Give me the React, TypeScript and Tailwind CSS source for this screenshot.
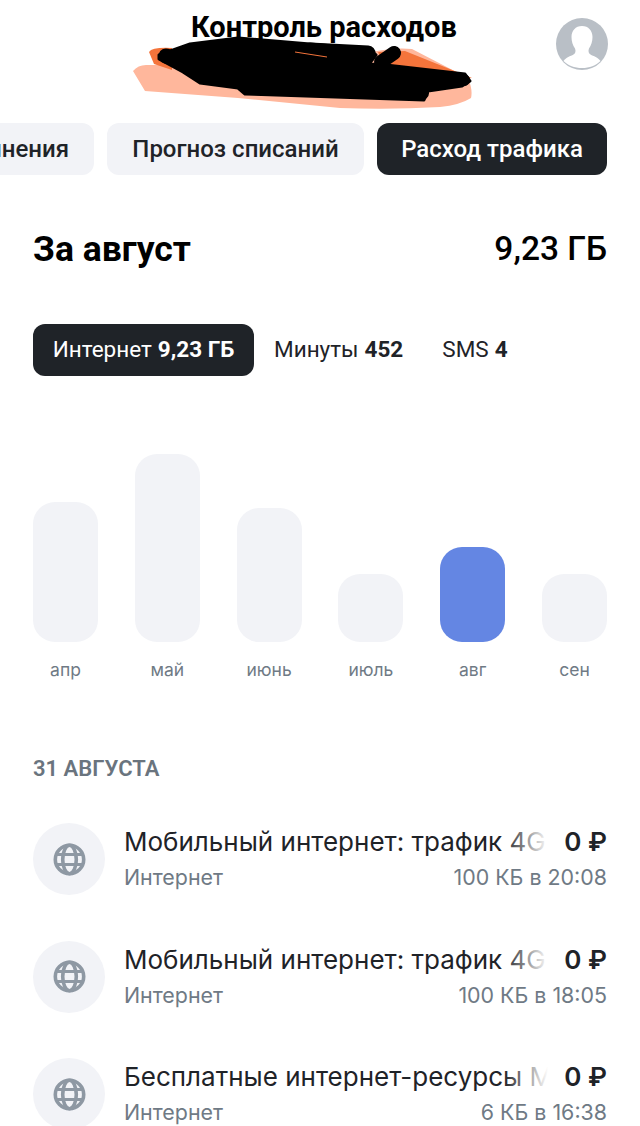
const months = [
  { label: "апр", height: 140 },
  { label: "май", height: 188 },
  { label: "июнь", height: 134 },
  { label: "июль", height: 68 },
  { label: "авг", height: 95, active: true },
  { label: "сен", height: 68 },
];

const operations = [
  { title: "Мобильный интернет: трафик 4G", detail: "100 КБ в 20:08" },
  { title: "Мобильный интернет: трафик 4G", detail: "100 КБ в 18:05" },
  { title: "Бесплатные интернет-ресурсы М", detail: "6 КБ в 16:38" },
];

function GlobeIcon() {
  return (
    <svg width="33" height="33" viewBox="0 0 33 33" fill="none" stroke="#8e98a3" strokeWidth="3.6">
      <circle cx="16.500" cy="16.500" r="14.200" />
      <ellipse cx="16.500" cy="16.500" rx="6.800" ry="14.200" />
      <path d="M3.500 11.500h26M3.500 21.500h26" strokeWidth="3.2" />
    </svg>
  );
}

function Avatar() {
  return (
    <svg width="52" height="52" viewBox="0 0 52 52">
      <circle cx="26" cy="26" r="26" fill="#b9bfc6" />
      <path
        d="M26 8c-6.500 0-10.500 4.800-10.500 11 0 4.500 1.300 8.500 3.500 11.500 1 2.500.5 4.800-1.500 6-3 1.800-7.500 2.800-10 6.500 4.500 4.500 11 7 18.500 7s14-2.500 18.500-7c-2.500-3.700-7-4.700-10-6.500-2-1.200-2.500-3.500-1.500-6 2.200-3 3.500-7 3.500-11.500C36.500 12.800 32.500 8 26 8z"
        fill="#fff"
      />
    </svg>
  );
}

function Scribble() {
  return (
    <svg className="absolute left-[125px] top-[36px]" width="355" height="76" viewBox="125 36 355 76">
      <path
        d="M133 71 Q138 65 146 65 L200 65 L372 52 Q395 47 412 49 L468 78 Q473 90 471 98 Q460 105 440 107 Q390 110 340 108 L238 98 L145 91 Z"
        fill="#ffb79c"
      />
      <path d="M149 52 Q152 47 172 48 L172 70 L154 64 Z" fill="#f4743b" />
      <path d="M378 52 L405 51 L472 78 L450 80 L384 66 Z" fill="#f4743b" />
      <path
        d="M159 55 L190 44 L238 38 L369 49 L376 55 L369 64 L386 65 L465 74 L470 81 L462 86 L428 91 L424 100 L245 94 L238 88 L200 83 L183 72 L159 59 Z"
        fill="#000"
        stroke="#000"
        strokeWidth="3"
        strokeLinejoin="round"
      />
      <g stroke="#000" strokeLinecap="round" fill="none">
        <path d="M166 56 L205 68" strokeWidth="15" />
        <path d="M381 62 L394 53" strokeWidth="14" />
        <path d="M310 50 L368 53" strokeWidth="15" />
        <path d="M410 78 L464 80" strokeWidth="12" />
        <path d="M250 88 L422 93" strokeWidth="14" />
      </g>
      <path d="M295 52 L327 57" stroke="#f4743b" strokeWidth="1" />
    </svg>
  );
}

export default function App() {
  return (
    <div
      className="relative h-[1126px] w-[640px] overflow-hidden bg-white text-[#1f2328]"
      style={{ fontFamily: "Roboto, 'Liberation Sans', sans-serif" }}
    >
      <header className="relative h-[123px]">
        <h1 className="pt-[10px] pl-[191px] text-[29px] leading-[34px] font-bold text-black">
          Контроль расходов
        </h1>
        <Scribble />
        <div className="absolute right-[32px] top-[18px]">
          <Avatar />
        </div>
      </header>

      <div className="flex justify-end gap-[13px] pr-[33px] text-[24px] font-medium">
        <div className="flex h-[52px] shrink-0 items-center rounded-[12px] bg-[#f2f3f7] pr-[25px] pl-[20px]">
          Пополнения
        </div>
        <div className="flex h-[52px] w-[257px] shrink-0 items-center justify-center rounded-[12px] bg-[#f2f3f7]">
          Прогноз списаний
        </div>
        <div className="flex h-[52px] w-[230px] shrink-0 items-center justify-center rounded-[12px] bg-[#1f2328] text-white">
          Расход трафика
        </div>
      </div>

      <div className="mt-[54px] flex items-center justify-between px-[33px] text-black">
        <h2 className="text-[35.500px] leading-[40px] font-bold">За август</h2>
        <span className="text-[33.500px] leading-[40px] font-medium">9,23 ГБ</span>
      </div>

      <div className="mt-[55px] flex items-center px-[33px] text-[22.500px]">
        <div className="flex h-[52px] w-[221px] items-center justify-center gap-[6px] rounded-[12px] bg-[#1f2328] text-white">
          Интернет <b className="font-bold">9,23 ГБ</b>
        </div>
        <div className="ml-[20px] flex gap-[6px]">
          Минуты <b className="font-bold">452</b>
        </div>
        <div className="ml-[39px] flex gap-[6px]">
          SMS <b className="font-bold">4</b>
        </div>
      </div>

      <div className="mt-[78px] flex h-[188px] items-end justify-between px-[33px]">
        {months.map((m) => (
          <div
            key={m.label}
            className={m.active ? "w-[65px] rounded-[22px] bg-[#6486e3]" : "w-[65px] rounded-[22px] bg-[#f2f3f7]"}
            style={{ height: m.height }}
          />
        ))}
      </div>
      <div className="mt-[16px] flex justify-between px-[33px] font-['Inter'] text-[17.500px] leading-[24px] text-[#6f7a85]">
        {months.map((m) => (
          <div key={m.label} className="w-[65px] text-center">
            {m.label}
          </div>
        ))}
      </div>

      <div className="mt-[73px] px-[33px] text-[22px] leading-[28px] font-semibold text-[#6a747e]">31 АВГУСТА</div>

      <div className="mt-[40px] flex flex-col gap-[45.500px] px-[33px] font-['Inter']">
        {operations.map((op, i) => (
          <div key={i} className="flex h-[72px] items-center gap-[19px]">
            <div className="flex h-[72px] w-[72px] shrink-0 items-center justify-center rounded-full bg-[#f2f3f7]">
              <GlobeIcon />
            </div>
            <div className="min-w-0 flex-1 pt-[1px]">
              <div className="flex items-center justify-between text-[26px] leading-[34px]">
                <div className="relative w-[424px] overflow-hidden whitespace-nowrap">
                  {op.title}
                  <div className="absolute inset-y-0 right-0 w-[44px] bg-gradient-to-r from-white/0 to-white" />
                </div>
                <span className="font-semibold">0 ₽</span>
              </div>
              <div className="flex justify-between pt-[1px] text-[21.400px] leading-[34px] text-[#6f7a85]">
                <span>Интернет</span>
                <span>{op.detail}</span>
              </div>
            </div>
          </div>
        ))}
      </div>
    </div>
  );
}
